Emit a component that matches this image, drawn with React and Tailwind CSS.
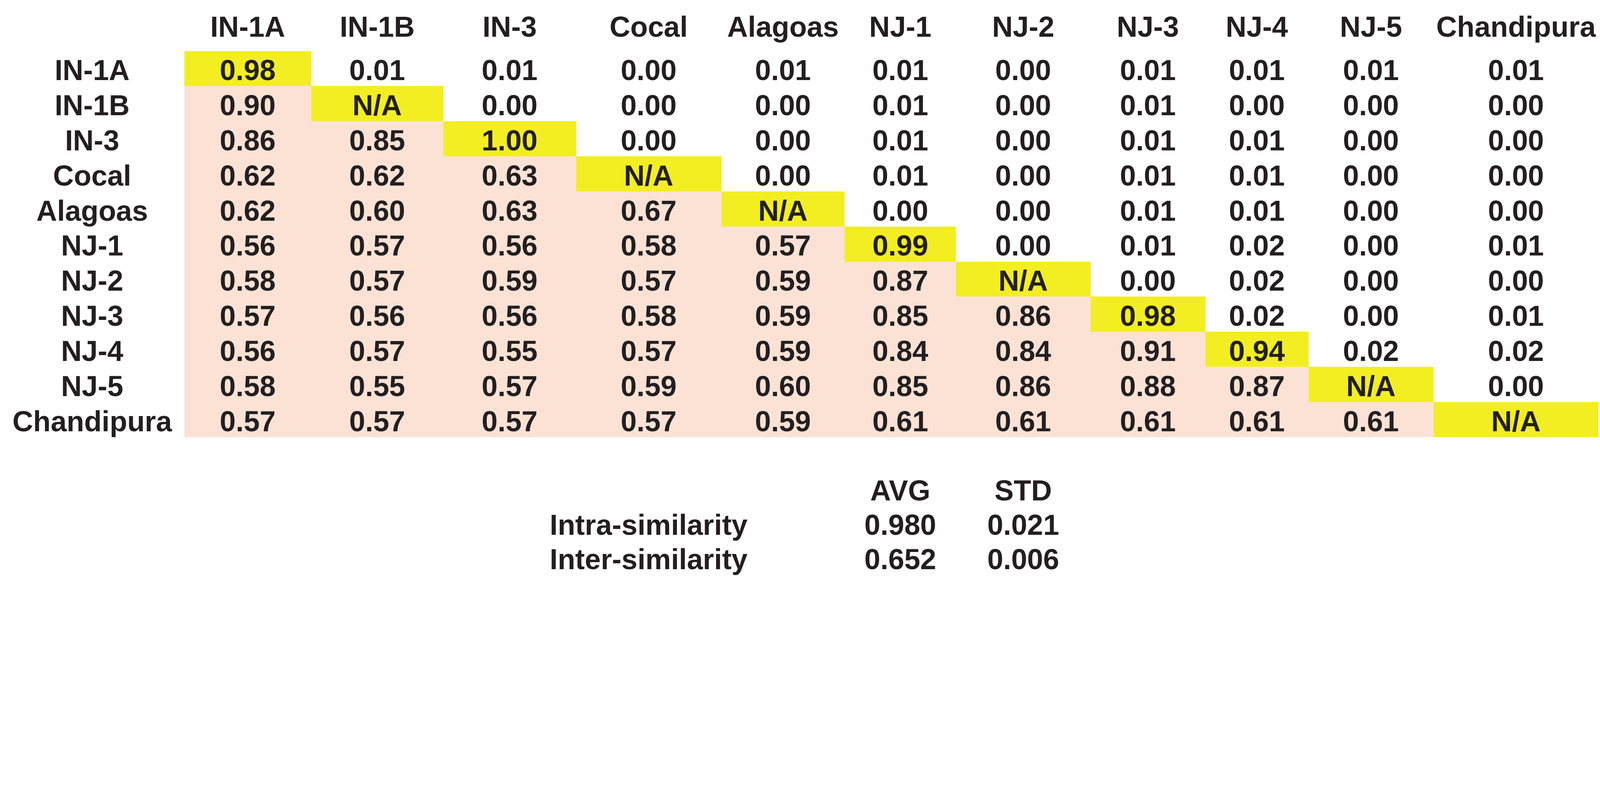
const strains = [
  "IN-1A",
  "IN-1B",
  "IN-3",
  "Cocal",
  "Alagoas",
  "NJ-1",
  "NJ-2",
  "NJ-3",
  "NJ-4",
  "NJ-5",
  "Chandipura",
];

const matrix = [
  ["0.98", "0.01", "0.01", "0.00", "0.01", "0.01", "0.00", "0.01", "0.01", "0.01", "0.01"],
  ["0.90", "N/A", "0.00", "0.00", "0.00", "0.01", "0.00", "0.01", "0.00", "0.00", "0.00"],
  ["0.86", "0.85", "1.00", "0.00", "0.00", "0.01", "0.00", "0.01", "0.01", "0.00", "0.00"],
  ["0.62", "0.62", "0.63", "N/A", "0.00", "0.01", "0.00", "0.01", "0.01", "0.00", "0.00"],
  ["0.62", "0.60", "0.63", "0.67", "N/A", "0.00", "0.00", "0.01", "0.01", "0.00", "0.00"],
  ["0.56", "0.57", "0.56", "0.58", "0.57", "0.99", "0.00", "0.01", "0.02", "0.00", "0.01"],
  ["0.58", "0.57", "0.59", "0.57", "0.59", "0.87", "N/A", "0.00", "0.02", "0.00", "0.00"],
  ["0.57", "0.56", "0.56", "0.58", "0.59", "0.85", "0.86", "0.98", "0.02", "0.00", "0.01"],
  ["0.56", "0.57", "0.55", "0.57", "0.59", "0.84", "0.84", "0.91", "0.94", "0.02", "0.02"],
  ["0.58", "0.55", "0.57", "0.59", "0.60", "0.85", "0.86", "0.88", "0.87", "N/A", "0.00"],
  ["0.57", "0.57", "0.57", "0.57", "0.59", "0.61", "0.61", "0.61", "0.61", "0.61", "N/A"],
];

const cols =
  "grid grid-cols-[471.75px_324.75px_338.25px_339.75px_372px_315.75px_285px_344.25px_294px_264px_320.25px_422.25px]";

const cell = "flex justify-center h-[89.85px] pt-[12.75px] whitespace-nowrap";

const cellBg = (r, c) => {
  if (r === c) return "bg-[#f2ee22]";
  if (r > c) return "bg-[#fbe2d5]";
  return "bg-white";
};

const App = () => {
  return (
    <div
      className="w-full min-h-screen bg-white text-[#231f20] font-bold text-[73.5px] leading-none"
      style={{ fontFamily: '"Liberation Sans", Arial, sans-serif' }}
    >
      {/* similarity matrix */}
      <div className={cols}>
        <div className="h-[130.5px]"></div>
        {strains.map((name) => (
          <div key={name} className="flex justify-center h-[130.5px] pt-[31.5px] whitespace-nowrap">
            {name}
          </div>
        ))}

        {matrix.map((row, r) => (
          <div key={strains[r]} className="contents">
            <div className={cell}>{strains[r]}</div>
            {row.map((value, c) => (
              <div key={c} className={`${cell} ${cellBg(r, c)}`}>
                {value}
              </div>
            ))}
          </div>
        ))}
      </div>

      {/* summary */}
      <div className={`${cols} mt-[87.75px]`}>
        {[
          ["", "AVG", "STD"],
          ["Intra-similarity", "0.980", "0.021"],
          ["Inter-similarity", "0.652", "0.006"],
        ].map(([label, avg, std], i) => (
          <div key={i} className="contents">
            <div className="col-start-5 flex justify-center h-[88.1px] pt-[12.75px] whitespace-nowrap">
              {label}
            </div>
            <div className="col-start-7 flex justify-center h-[88.1px] pt-[12.75px]">{avg}</div>
            <div className="flex justify-center h-[88.1px] pt-[12.75px]">{std}</div>
          </div>
        ))}
      </div>
    </div>
  );
};

export default App;
